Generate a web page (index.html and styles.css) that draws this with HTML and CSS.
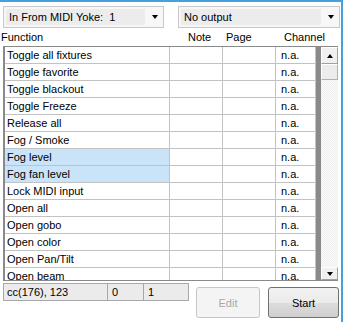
FILE: index.html
```html
<!DOCTYPE html>
<html>
<head>
<meta charset="utf-8">
<link rel="stylesheet" href="styles.css">
</head>
<body>
<div class="window">
  <div class="combos">
    <div class="combo combo-in"><span class="combo-text">In From MIDI Yoke:  1</span><span class="combo-arrow"></span></div>
    <div class="combo combo-out"><span class="combo-text">No output</span><span class="combo-arrow"></span></div>
  </div>
  <div class="header">
    <span class="h-func">Function</span>
    <span class="h-note">Note</span>
    <span class="h-page">Page</span>
    <span class="h-chan">Channel</span>
  </div>
  <div class="list">
    <div class="grid">
      <div class="cell">Toggle all fixtures</div><div class="cell"></div><div class="cell"></div><div class="cell ch">n.a.</div>
      <div class="cell">Toggle favorite</div><div class="cell"></div><div class="cell"></div><div class="cell ch">n.a.</div>
      <div class="cell">Toggle blackout</div><div class="cell"></div><div class="cell"></div><div class="cell ch">n.a.</div>
      <div class="cell">Toggle Freeze</div><div class="cell"></div><div class="cell"></div><div class="cell ch">n.a.</div>
      <div class="cell">Release all</div><div class="cell"></div><div class="cell"></div><div class="cell ch">n.a.</div>
      <div class="cell">Fog / Smoke</div><div class="cell"></div><div class="cell"></div><div class="cell ch">n.a.</div>
      <div class="cell sel">Fog level</div><div class="cell"></div><div class="cell"></div><div class="cell ch">n.a.</div>
      <div class="cell sel">Fog fan level</div><div class="cell"></div><div class="cell"></div><div class="cell ch">n.a.</div>
      <div class="cell">Lock MIDI input</div><div class="cell"></div><div class="cell"></div><div class="cell ch">n.a.</div>
      <div class="cell">Open all</div><div class="cell"></div><div class="cell"></div><div class="cell ch">n.a.</div>
      <div class="cell">Open gobo</div><div class="cell"></div><div class="cell"></div><div class="cell ch">n.a.</div>
      <div class="cell">Open color</div><div class="cell"></div><div class="cell"></div><div class="cell ch">n.a.</div>
      <div class="cell">Open Pan/Tilt</div><div class="cell"></div><div class="cell"></div><div class="cell ch">n.a.</div>
      <div class="cell">Open beam</div><div class="cell"></div><div class="cell"></div><div class="cell ch">n.a.</div>
    </div>
    <div class="band"></div>
    <div class="scroll">
      <div class="sb-btn sb-up"><span class="arrow-up"></span></div>
      <div class="sb-thumb"></div>
      <div class="sb-track"></div>
      <div class="sb-btn sb-down"><span class="arrow-down"></span></div>
    </div>
  </div>
  <div class="footer">
    <div class="status">
      <span class="st1">cc(176), 123</span>
      <span class="st2">0</span>
      <span class="st3">1</span>
    </div>
    <button class="btn btn-edit" disabled>Edit</button>
    <button class="btn btn-start">Start</button>
  </div>
</div>
</body>
</html>
```
FILE: styles.css
```css
* { box-sizing: border-box; }
body {
  margin: 0;
  font: 11px "Liberation Sans", Arial, sans-serif;
  color: #000;
  background: #fff;
}
.window {
  width: 343px;
  height: 322px;
  border-top: 2px solid #45a0dd;
  border-right: 2px solid #45a0dd;
  background: #fff;
  overflow: hidden;
  display: flex;
  flex-direction: column;
}
.combos {
  display: flex;
  gap: 14px;
  padding: 4px 0 0 3px;
}
.combo {
  height: 22px;
  border: 1px solid #c8c8c8;
  background: #f7f7f7;
  display: flex;
}
.combo-in { width: 161px; }
.combo-out { width: 162px; }
.combo-text {
  flex: 1;
  margin: 2px;
  background: #ececec;
  padding-left: 3px;
  line-height: 16px;
  white-space: pre;
}
.combo-arrow {
  width: 16px;
  display: flex;
  align-items: center;
  justify-content: center;
}
.combo-arrow::before {
  content: "";
  border-left: 3.5px solid transparent;
  border-right: 3.5px solid transparent;
  border-top: 4px solid #000;
}
.header {
  display: flex;
  height: 18px;
  line-height: 18px;
  padding-left: 1px;
}
.h-func { width: 187px; }
.h-note { width: 38px; }
.h-page { width: 58px; }
.list {
  display: flex;
  margin-left: 3px;
  width: 335px;
  height: 235px;
  border-top: 1px solid #8a8a8a;
  border-bottom: 1px solid #8a8a8a;
  border-left: 2px solid #8a8a8a;
}
.grid {
  width: 311px;
  display: grid;
  grid-template-columns: 165px 53px 53px 40px;
  grid-auto-rows: 17px;
  align-content: start;
  overflow: hidden;
}
.cell {
  border-right: 1px solid #c2c2c2;
  border-bottom: 1px solid #c2c2c2;
  padding-left: 2px;
  line-height: 16px;
  white-space: nowrap;
  overflow: hidden;
}
.cell.ch { padding-left: 5px; }
.cell.sel { background: #c9e4f8; }
.band {
  width: 5px;
  background: #8a8a8a;
}
.scroll {
  width: 17px;
  display: flex;
  flex-direction: column;
}
.sb-btn {
  background: #f0f0f0;
  border: 1px solid;
  border-color: #fff #a0a0a0 #a0a0a0 #fff;
  display: flex;
  align-items: center;
  justify-content: center;
}
.sb-up { height: 17px; }
.sb-down { height: 13px; }
.sb-thumb {
  height: 16px;
  background: #ececec;
  border: 1px solid;
  border-color: #fff #b0b0b0 #b0b0b0 #fff;
}
.sb-track {
  flex: 1;
  background: repeating-conic-gradient(#ececec 0 25%, #fdfdfd 0 50%) 0 0 / 2px 2px;
}
.arrow-up {
  border-left: 3.5px solid transparent;
  border-right: 3.5px solid transparent;
  border-bottom: 4px solid #000;
}
.arrow-down {
  border-left: 3.5px solid transparent;
  border-right: 3.5px solid transparent;
  border-top: 4px solid #000;
}
.footer {
  display: flex;
  align-items: flex-start;
  padding-left: 3px;
}
.status {
  display: flex;
  margin-top: 2px;
  height: 18px;
}
.status span {
  border: 1px solid #a8a8a8;
  background: #ebebeb;
  line-height: 16px;
  padding-left: 3px;
}
.status .st1 { width: 105px; }
.status .st2 { width: 37px; margin-left: -1px; padding-left: 4px; }
.status .st3 { width: 46px; margin-left: -1px; padding-left: 4px; }
.btn {
  margin-top: 6px;
  height: 31px;
  border-radius: 3px;
  font: 11px "Liberation Sans", Arial, sans-serif;
  padding: 0;
}
.btn-edit {
  margin-left: 7px;
  width: 64px;
  border: 1px solid #c6c6c6;
  background: #f4f4f4;
  color: #a8a8a8;
}
.btn-start {
  margin-left: 8px;
  width: 71px;
  border: 1px solid #707070;
  color: #000;
  background: linear-gradient(#f2f2f2 0%, #ebebeb 50%, #dddddd 51%, #cfcfcf 100%);
}
```
